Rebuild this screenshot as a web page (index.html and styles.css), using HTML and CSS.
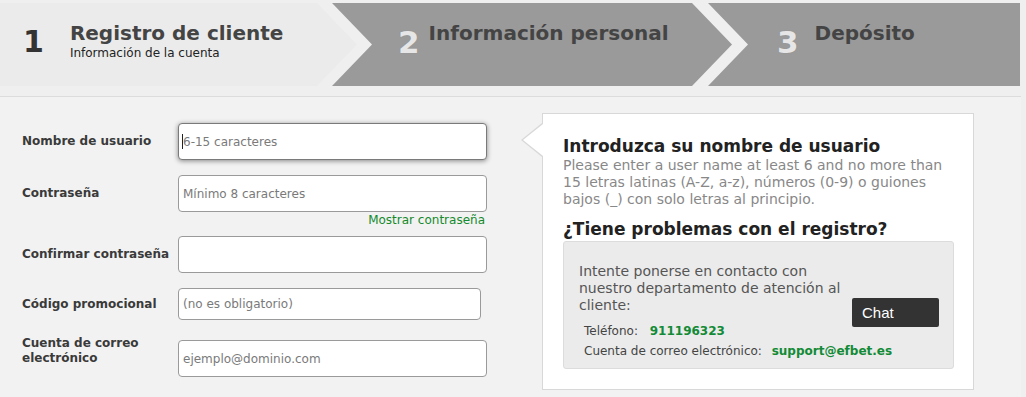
FILE: index.html
```
<!DOCTYPE html>
<html lang="es">
<head>
    <meta charset="UTF-8">
    <meta name="viewport" content="width=device-width, initial-scale=1.0">
    <title>Registro de cliente</title>
    <link rel="stylesheet" href="styles.css">
</head>
<body>
    <div class="page">
        <div class="header">
            <div class="steps">
                <div class="step step-first">
                    <span class="step-num">1</span>
                    <div class="step-text">
                        <div class="step-title">Registro de cliente</div>
                        <div class="step-sub">Información de la cuenta</div>
                    </div>
                </div>
                <div class="step step-middle">
                    <span class="step-num">2</span>
                    <div class="step-text">
                        <div class="step-title">Información personal</div>
                    </div>
                </div>
                <div class="step step-last">
                    <span class="step-num">3</span>
                    <div class="step-text">
                        <div class="step-title">Depósito</div>
                    </div>
                </div>
            </div>
        </div>

        <div class="content">
            <form class="reg-form">
                <div class="form-row row-user">
                    <label for="username">Nombre de usuario</label>
                    <span class="caret-wrap">
                        <input type="text" id="username" class="is-focus" placeholder="6-15 caracteres">
                    </span>
                </div>
                <div class="form-row">
                    <label for="password">Contraseña</label>
                    <input type="password" id="password" placeholder="Mínimo 8 caracteres">
                </div>
                <div class="show-pass"><a href="#">Mostrar contraseña</a></div>
                <div class="form-row row-confirm">
                    <label for="password2">Confirmar contraseña</label>
                    <input type="password" id="password2">
                </div>
                <div class="form-row row-promo">
                    <label for="promo">Código promocional</label>
                    <input type="text" id="promo" class="input-short" placeholder="(no es obligatorio)">
                </div>
                <div class="form-row row-email">
                    <label for="email">Cuenta de correo electrónico</label>
                    <input type="email" id="email" placeholder="ejemplo@dominio.com">
                </div>
            </form>

            <div class="hint-panel">
                <h2>Introduzca su nombre de usuario</h2>
                <p>Please enter a user name at least 6 and no more than 15 letras latinas (A-Z, a-z), números (0-9) o guiones bajos (_) con solo letras al principio.</p>
                <h2 class="trouble">¿Tiene problemas con el registro?</h2>
                <div class="help-box">
                    <div class="help-info">
                        <p>Intente ponerse en contacto con nuestro departamento de atención al cliente:</p>
                        <div class="contact-line">Teléfono: <b class="phone">911196323</b></div>
                        <div class="contact-line">Cuenta de correo electrónico: <b>support@efbet.es</b></div>
                    </div>
                    <button type="button" class="chat-btn">Chat</button>
                </div>
            </div>
        </div>
    </div>
</body>
</html>
```

FILE: styles.css
```
body {
    margin: 0;
    background: #efefef;
    font-family: "DejaVu Sans", Verdana, sans-serif;
    color: #333;
}

.page {
    width: 1021px;
}

.header {
    height: 96px;
    border-bottom: 1px solid #dcdcdc;
    background: #efefef;
}

.steps {
    display: flex;
    height: 83px;
    padding-top: 3px;
}

.step {
    display: flex;
    align-items: flex-start;
    height: 83px;
    flex-shrink: 0;
    box-sizing: border-box;
}

.step-first {
    width: 357px;
    background: #ebebeb;
    clip-path: polygon(0 0, 317px 0, 357px 50%, 317px 100%, 0 100%);
    padding-left: 23px;
}

.step-middle {
    width: 400px;
    margin-left: -25px;
    background: #9a9a9a;
    clip-path: polygon(0 0, 360px 0, 400px 50%, 360px 100%, 0 100%, 40px 50%);
    padding-left: 66px;
}

.step-last {
    width: 312px;
    margin-left: -24px;
    background: #9a9a9a;
    clip-path: polygon(0 0, 100% 0, 100% 100%, 0 100%, 40px 50%);
    padding-left: 69px;
}

.step-num {
    font-size: 31px;
    font-weight: bold;
    line-height: 1;
    margin-top: 24px;
    color: #e6e6e6;
    text-shadow: 0 0 1px #8a8a8a;
}

.step-first .step-num {
    font-size: 30px;
    color: #333;
    text-shadow: none;
    margin-right: 26px;
}

.step-middle .step-num {
    margin-right: 9px;
}

.step-last .step-num {
    margin-right: 16px;
}

.step-title {
    font-size: 20px;
    font-weight: bold;
    color: #444;
    margin-top: 18px;
    line-height: 24px;
}

.step-middle .step-title,
.step-last .step-title {
    margin-top: 18px;
}

.step-sub {
    font-size: 12px;
    color: #222;
    line-height: 14px;
    margin-top: 1px;
}

.content {
    display: flex;
    align-items: flex-start;
    background: #f2f2f2;
    height: 300px;
}

.reg-form {
    width: 487px;
    padding: 26px 0 0 22px;
    box-sizing: border-box;
}

.form-row {
    display: flex;
    align-items: center;
    margin-bottom: 16px;
}

.form-row label {
    width: 156px;
    flex-shrink: 0;
    font-size: 12px;
    font-weight: bold;
    color: #3a3a3a;
    line-height: 15px;
}

.form-row input {
    width: 309px;
    height: 37px;
    box-sizing: border-box;
    border: 1px solid #9a9a9a;
    border-radius: 4px;
    background: #fff;
    padding: 0 4px;
    font-family: "DejaVu Sans", Verdana, sans-serif;
    font-size: 12px;
    color: #333;
    outline: none;
}

.form-row input::placeholder {
    color: #7a7a7a;
}

.form-row input.is-focus {
    border-color: #7a7a7a;
    box-shadow: 0 1px 5px rgba(0, 0, 0, 0.45);
}

.form-row input.input-short {
    width: 303px;
    height: 32px;
}

/* text cursor in the focused field */
.caret-wrap {
    position: relative;
    display: flex;
}

.caret-wrap::after {
    content: "";
    position: absolute;
    left: 4px;
    top: 11px;
    width: 1px;
    height: 15px;
    background: #222;
}

.row-user {
    margin-bottom: 15px;
}

.show-pass {
    text-align: right;
    width: 463px;
    margin-top: -15px;
    margin-bottom: 9px;
    font-size: 12px;
    line-height: 14px;
}

.show-pass a {
    color: #158a2c;
    text-decoration: none;
}

.row-confirm {
    margin-bottom: 15px;
}

.row-promo {
    margin-bottom: 20px;
}

.row-email label {
    align-self: flex-start;
    margin-top: -4px;
}

.hint-panel {
    position: relative;
    width: 432px;
    height: 277px;
    box-sizing: border-box;
    margin: 16px 0 0 55px;
    padding: 21px 19px 0 20px;
    background: #fff;
    border: 1px solid #d8d8d8;
}

/* left pointer */
.hint-panel::before,
.hint-panel::after {
    content: "";
    position: absolute;
    top: 9px;
    width: 0;
    height: 0;
    border-style: solid;
}

.hint-panel::before {
    left: -22px;
    border-width: 17px 21px 17px 0;
    border-color: transparent #d8d8d8 transparent transparent;
}

.hint-panel::after {
    left: -20px;
    top: 10px;
    border-width: 16px 20px 16px 0;
    border-color: transparent #fff transparent transparent;
}

.hint-panel h2 {
    margin: 0;
    font-size: 17px;
    line-height: 22px;
    color: #222;
}

.hint-panel h2.trouble {
    margin-top: 10px;
}

.hint-panel > p {
    margin: 0;
    font-size: 14px;
    line-height: 17px;
    color: #888;
}

.help-box {
    display: flex;
    margin-top: 1px;
    height: 128px;
    box-sizing: border-box;
    background: #ebebeb;
    border: 1px solid #dcdcdc;
    border-radius: 3px;
    padding: 21px 0 0 15px;
}

.help-info {
    width: 273px;
    flex-shrink: 0;
}

.help-info p {
    margin: 0 0 7px;
    font-size: 14px;
    line-height: 17px;
    color: #555;
}

.contact-line {
    margin-left: 5px;
    font-size: 12px;
    line-height: 20px;
    color: #444;
    white-space: nowrap;
}

.contact-line b {
    color: #128a36;
    font-size: 12px;
    margin-left: 6px;
}

.contact-line b.phone {
    margin-left: 8px;
}

.chat-btn {
    align-self: flex-start;
    margin: 35px 0 0 0;
    width: 87px;
    height: 29px;
    border: none;
    border-radius: 2px;
    background: #333;
    color: #fff;
    font-family: "Liberation Sans", Arial, sans-serif;
    font-size: 15px;
    text-align: left;
    padding: 0 10px;
}
```
